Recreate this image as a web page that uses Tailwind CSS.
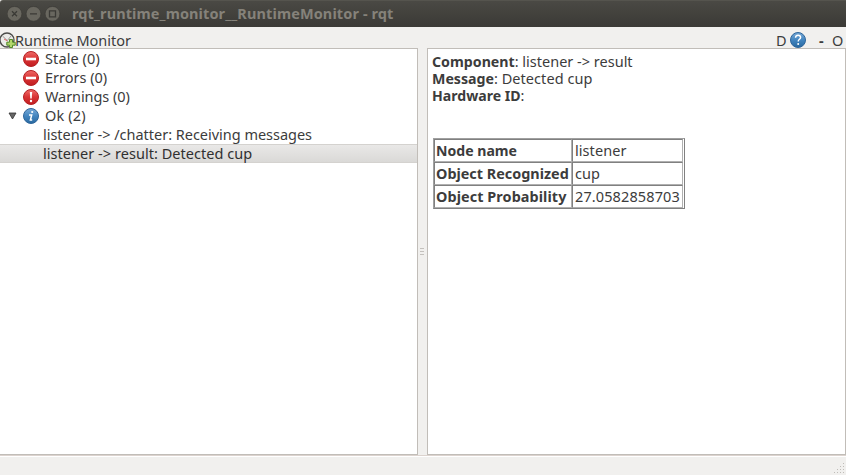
<!DOCTYPE html>
<html lang="en"><head><meta charset="utf-8"><title>rqt_runtime_monitor__RuntimeMonitor - rqt</title>
<script src="https://cdn.jsdelivr.net/npm/@tailwindcss/browser@4"></script></head>
<body class="w-[846px] h-[475px] overflow-hidden flex flex-col bg-[#f1f0ee] font-['Noto_Sans','Open_Sans',sans-serif] text-[14.5px] text-[#3c3c3c] whitespace-nowrap">
<svg class="absolute w-0 h-0">
<defs>
<linearGradient id="red" x2="0" y2="1"><stop stop-color="#ee6a68"/><stop offset=".5" stop-color="#d93434"/><stop offset="1" stop-color="#c01c20"/></linearGradient>
<linearGradient id="blue" x2="0" y2="1"><stop stop-color="#77a9d6"/><stop offset=".5" stop-color="#4486c0"/><stop offset="1" stop-color="#28689f"/></linearGradient>
</defs>
</svg>
<header class="h-[27px] shrink-0 flex items-center bg-linear-to-b from-[#4a4944] to-[#3b3a36] rounded-tl-[3px] pl-[7px] border-t border-[#55544e]">
<svg class="w-[54px] h-[16px] shrink-0" viewBox="0 0 54 16" fill="none" stroke="#3b3a36" stroke-width="1.3">
<g fill="#69675f" stroke="#373632" stroke-width=".6"><circle cx="7.5" cy="7.8" r="7.4"/><circle cx="26.5" cy="7.8" r="7.4"/><circle cx="45.5" cy="7.8" r="7.4"/></g>
<path d="M5 5.3l5 5M10 5.3l-5 5M23 7.8h7M42.5 4.8h6v6h-6z"/>
</svg>
<h1 class="ml-[11px] pb-[2px] font-bold text-[14.5px] leading-[20px] tracking-[0.11px] text-[#85827a]">rqt_runtime_monitor__RuntimeMonitor - rqt</h1>
</header>
<div class="h-[21px] shrink-0 flex">
<svg class="w-[16px] h-[21px] shrink-0" viewBox="0 0 16 21"><circle cx="7" cy="13" r="7" fill="#ebebe8" stroke="#4b4b49" stroke-width="1.3"/><path d="M2.5 9l4.8 4.6L11 9" fill="none" stroke="#999" stroke-width="1"/><path d="M4 12l3.3 1.8" stroke="#d66" stroke-width="1"/><path d="M9.5 12.5h3v2.7h2.7v3h-2.7v2.3h-3v-2.3H6.8v-3h2.7z" fill="#b4d76c" stroke="#52892a"/></svg>
<span class="leading-[20px] pt-[3px] -ml-[1px]">Runtime Monitor</span>
<span class="ml-auto leading-[20px] pt-[3px] w-[13px]">D</span>
<svg class="w-[18px] h-[21px]" viewBox="0 0 18 21"><circle cx="9" cy="13" r="7.5" fill="url(#blue)" stroke="#2f669b"/><path d="M6.5 10.7q.2-2.5 2.6-2.5t2.5 2.2c0 1.8-2.4 1.9-2.4 4" fill="none" stroke="#fff" stroke-width="1.4"/><circle cx="9.2" cy="16.9" r="1" fill="#fff"/></svg>
<span class="leading-[20px] pt-[3px] ml-[12px] w-[13px] font-bold">-</span>
<span class="leading-[20px] pt-[3px] w-[14px]">O</span>
</div>
<main class="h-[407px] shrink-0 flex">
<section class="w-[418px] shrink-0 bg-white border-t border-r border-b border-[#c1bdb8] leading-[19px]">
<div class="h-[19px] flex items-center pl-[22px]"><svg class="w-[18px] h-[18px]" viewBox="0 0 18 18"><circle cx="9" cy="9" r="7.5" fill="url(#red)" stroke="#b52023"/><path d="M4 9h10" stroke="#fff" stroke-width="2.6"/></svg><span class="ml-[5px] tracking-[0.1px]">Stale (0)</span></div>
<div class="h-[19px] flex items-center pl-[22px]"><svg class="w-[18px] h-[18px]" viewBox="0 0 18 18"><circle cx="9" cy="9" r="7.5" fill="url(#red)" stroke="#b52023"/><path d="M4 9h10" stroke="#fff" stroke-width="2.6"/></svg><span class="ml-[5px]">Errors (0)</span></div>
<div class="h-[19px] flex items-center pl-[22px]"><svg class="w-[18px] h-[18px]" viewBox="0 0 18 18"><circle cx="9" cy="9" r="7.5" fill="url(#red)" stroke="#b52023"/><path d="M7.8 4h2.4l-.5 6.5H8.3z" fill="#fff"/><circle cx="9" cy="13" r="1.2" fill="#fff"/></svg><span class="ml-[5px] tracking-[-0.08px]">Warnings (0)</span></div>
<div class="h-[19px] flex items-center pl-[8px]"><svg class="w-[9px] h-[8px] mr-[5px]" viewBox="0 0 9 8"><path d="M1 1h7L4.5 7z" fill="#666" stroke="#333" stroke-width=".8"/></svg><svg class="w-[18px] h-[18px]" viewBox="0 0 18 18"><circle cx="9" cy="9" r="7.5" fill="url(#blue)" stroke="#2f669b"/><path d="M7 8h2.7L8.4 13h1.8" fill="none" stroke="#fff" stroke-width="1.5"/><circle cx="10.2" cy="5" r="1.1" fill="#fff"/></svg><span class="ml-[5px] tracking-[0.15px]">Ok (2)</span></div>
<div class="h-[19px] pl-[43px] tracking-[-0.02px]">listener -&gt; /chatter: Receiving messages</div>
<div class="h-[19px] pl-[43px] bg-linear-to-b from-[#e9e8e7] to-[#dad9d7] border-y border-[#d4d2cf] leading-[17px] tracking-[0.04px] text-[#303030]">listener -&gt; result: Detected cup</div>
</section>
<div class="w-[9px] shrink-0 flex flex-col pl-[2px] gap-[2px] pt-[200px]">
<i class="w-[4px] h-px bg-[#c4c1bd]"></i><i class="w-[4px] h-px bg-[#c4c1bd]"></i><i class="w-[4px] h-px bg-[#c4c1bd]"></i>
</div>
<section class="grow bg-white border border-[#c1bdb8] pl-[4px] pt-[4px] leading-[17px]">
<p><b class="text-[14.2px]">Component</b>: listener -&gt; result</p>
<p><b class="text-[14.2px]">Message</b>: <span class="tracking-[0.06px]">Detected cup</span></p>
<p><b class="text-[14.1px]">Hardware ID</b>:</p>
<div class="mt-[34px] ml-px w-[252px] h-[71px] border border-[#a0a0a0] border-b-[#808080] border-r-[#808080] grid grid-cols-[138px_111px] grid-rows-[23px_23px_23px] leading-[21px]">
<b class="border border-[#808080] border-r-[#b0b0b0] border-b-[#b0b0b0] pl-px text-[14.1px]">Node name</b><span class="border border-[#808080] border-r-[#b0b0b0] border-b-[#b0b0b0] pl-[2px] tracking-[0.06px]">listener</span>
<b class="border border-[#808080] border-r-[#b0b0b0] border-b-[#b0b0b0] pl-px text-[14.4px]">Object Recognized</b><span class="border border-[#808080] border-r-[#b0b0b0] border-b-[#b0b0b0] pl-[2px]">cup</span>
<b class="border border-[#808080] border-r-[#b0b0b0] border-b-[#b0b0b0] pl-px text-[14.4px] tracking-[0.08px]">Object Probability</b><span class="border border-[#808080] border-r-[#b0b0b0] border-b-[#b0b0b0] pl-[2px] tracking-[0.11px]">27.0582858703</span>
</div>
</section>
</main>
<footer class="grow border-t border-[#dcd3ce] flex flex-col"><div class="h-px bg-white"></div>
<svg class="w-[14px] h-[14px] ml-auto mt-auto" viewBox="0 0 14 14" fill="#bfbcb8"><path d="M11 2h1v1h-1zM8 5h1v1H8zM11 5h1v1h-1zM5 8h1v1H5zM8 8h1v1H8zM11 8h1v1h-1zM2 11h1v1H2zM5 11h1v1H5zM8 11h1v1H8zM11 11h1v1h-1z"/></svg>
</footer>
</body></html>
